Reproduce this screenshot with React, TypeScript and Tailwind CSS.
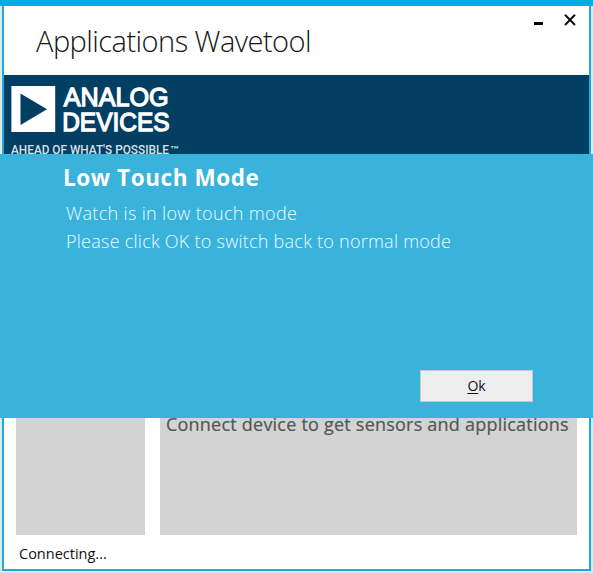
import React from 'react';

function Logo() {
  return (
    <svg width="190" height="79" viewBox="0 0 190 79" className="block" role="img" aria-label="Analog Devices">
      <rect x="7.400" y="11" width="43.800" height="46" fill="#fff" />
      <path d="M16.500 18.500V50L43 34.300Z" fill="#023f62" />
      <g fill="#fff" fontFamily="'Liberation Sans', Arial, sans-serif" stroke="#fff">
        <text x="59.700" y="31.400" fontSize="26.500" strokeWidth="1.300" textLength="105" lengthAdjust="spacingAndGlyphs">ANALOG</text>
        <text x="58.200" y="55.600" fontSize="26.500" strokeWidth="1.300" textLength="107.500" lengthAdjust="spacingAndGlyphs">DEVICES</text>
      </g>
      <g fill="#d5e2ea" fontFamily="Roboto, sans-serif" fontWeight="500">
        <text x="7" y="79.300" fontSize="12" textLength="158" lengthAdjust="spacingAndGlyphs">AHEAD OF WHAT'S POSSIBLE</text>
        <text x="166" y="78.300" fontSize="10" textLength="9" lengthAdjust="spacingAndGlyphs">™</text>
      </g>
    </svg>
  );
}

function TitleBar() {
  return (
    <header className="flex h-[69px] shrink-0 items-start justify-between bg-white">
      <h1 className="ml-8 mt-[15px] whitespace-nowrap text-[29px] font-light leading-10 tracking-[-0.54px] text-[#151515]">
        Applications Wavetool
      </h1>
      <div className="mr-[13px] mt-2 flex items-start gap-[21px]">
        <button aria-label="Minimize" className="mt-[8px] h-[3px] w-[9px] bg-black" />
        <button aria-label="Close">
          <svg width="12" height="12" viewBox="0 0 12 12" fill="none" stroke="#111" strokeWidth="2" className="block">
            <path d="M1 .8 11 11M11 .8 1 11" />
          </svg>
        </button>
      </div>
    </header>
  );
}

function Dialog() {
  return (
    <section role="dialog" className="absolute left-0 top-[154px] flex h-[264px] w-full flex-col bg-[#39b2dc] text-white">
      <h2 className="ml-[63px] mt-[8px] whitespace-nowrap text-[22.500px] font-bold leading-8 tracking-[0.58px]">Low Touch Mode</h2>
      <div className="ml-[66px] mt-[5px] whitespace-nowrap text-[18px] font-light leading-7 text-[#f0fbff]">
        <p className="tracking-[0.34px]">Watch is in low touch mode</p>
        <p className="tracking-[0.25px]">Please click OK to switch back to normal mode</p>
      </div>
      <button className="mb-4 mr-[60px] mt-auto h-8 w-[113px] self-end border border-[#cbc9cc] bg-[#ededee] text-[14px] leading-none text-[#111]">
        <span className="underline underline-offset-2">O</span>k
      </button>
    </section>
  );
}

export default function App() {
  return (
    <div className="relative h-[573px] w-[593px] overflow-hidden bg-[#dfe8ea] font-['Open_Sans','Noto_Sans',sans-serif]">
      <div className="h-[6px] bg-[#00aee0]" />
      <main className="mx-[2px] flex h-[565px] flex-col border-x-2 border-b-2 border-[#18addb] bg-white">
        <TitleBar />
        <div className="h-[79px] shrink-0 bg-[#023f62]">
          <Logo />
        </div>
        <div className="flex h-[381px] shrink-0 gap-[15px] px-3 pt-4">
          <div className="w-[129px] bg-[#d3d3d3]" />
          <div className="flex w-[417px] flex-col bg-[#d3d3d3]">
            <p className="mt-[239px] whitespace-nowrap pl-[6px] text-[18px] leading-[30px] tracking-[0.22px] text-[#555] [-webkit-text-stroke:0.2px_#555]">
              Connect device to get sensors and applications
            </p>
          </div>
        </div>
        <footer className="pl-[15px] pt-[9px] text-[14.500px] leading-5 text-[#111]">Connecting...</footer>
      </main>
      <Dialog />
    </div>
  );
}
